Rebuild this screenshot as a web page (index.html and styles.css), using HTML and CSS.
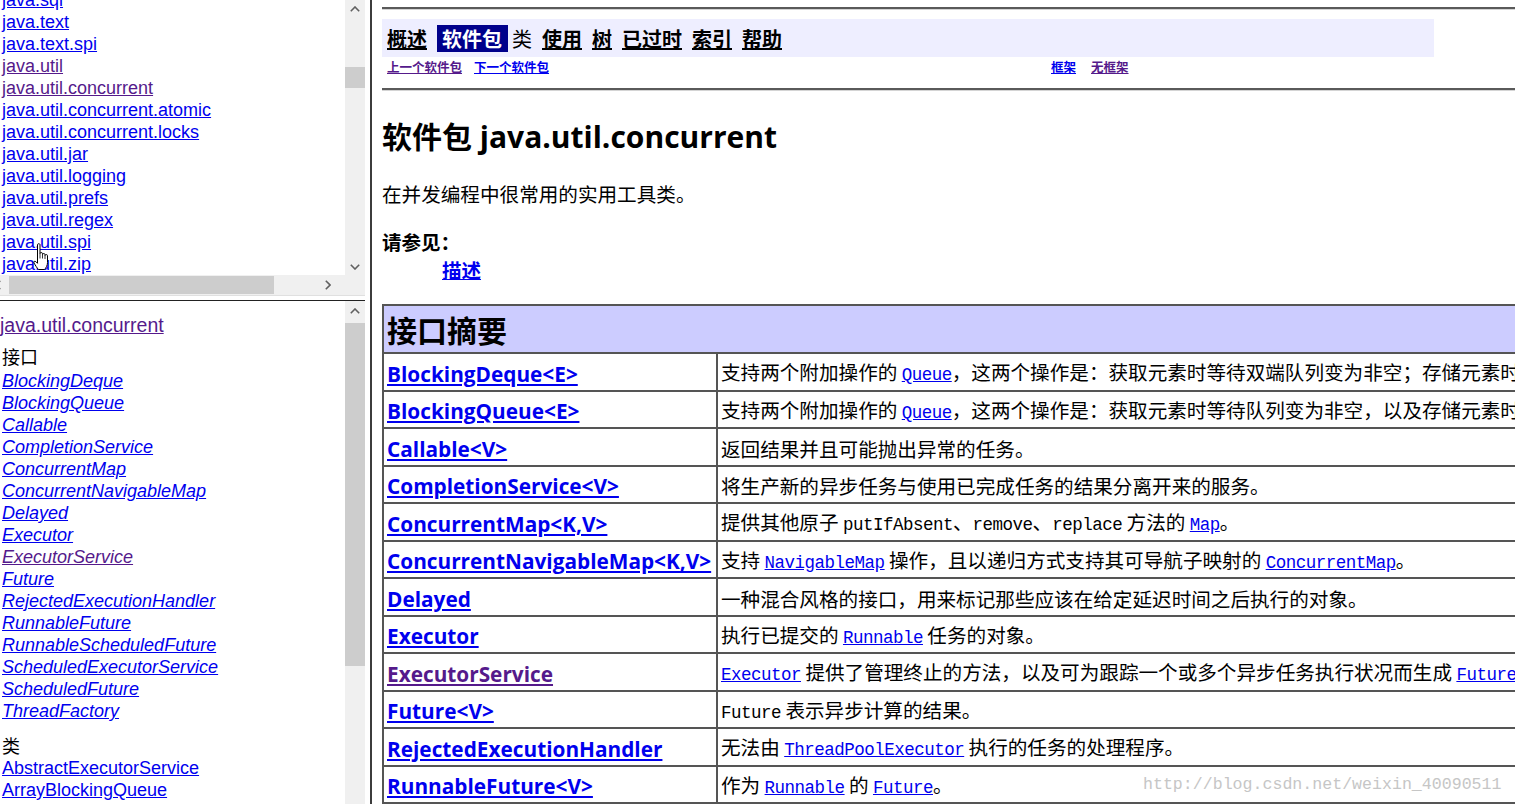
FILE: index.html
```html
<!DOCTYPE html>
<html lang="zh-CN">
<head>
<meta charset="utf-8">
<title>java.util.concurrent</title>
<link rel="stylesheet" href="styles.css">
</head>
<body>
<div class="frameset">
  <div class="left">
    <div class="top-frame">
      <div class="top-view">
        <div class="top-content">
          <ul class="pkg-list">
            <li><a href="#">java.sql</a></li>
            <li><a href="#">java.text</a></li>
            <li><a href="#">java.text.spi</a></li>
            <li><a class="visited" href="#">java.util</a></li>
            <li><a class="visited" href="#">java.util.concurrent</a></li>
            <li><a href="#">java.util.concurrent.atomic</a></li>
            <li><a href="#">java.util.concurrent.locks</a></li>
            <li><a href="#">java.util.jar</a></li>
            <li><a href="#">java.util.logging</a></li>
            <li><a href="#">java.util.prefs</a></li>
            <li><a href="#">java.util.regex</a></li>
            <li><a href="#">java.util.spi</a></li>
            <li><a href="#">java.util.zip</a></li>
            <li><a href="#">javax.accessibility</a></li>
          </ul>
        </div>
        <div class="vscroll">
          <div class="sb-btn"><svg width="10" height="6" viewBox="0 0 10 6"><polyline points="0.8,5.2 5,1 9.2,5.2" class="chev"/></svg></div>
          <div class="sb-track">
            <div class="thumb top-thumb"></div>
          </div>
          <div class="sb-btn"><svg width="10" height="6" viewBox="0 0 10 6"><polyline points="0.8,0.8 5,5 9.2,0.8" class="chev"/></svg></div>
        </div>
      </div>
      <div class="hscroll-row">
        <div class="hscroll">
          <div class="hs-left"><svg width="6" height="10" viewBox="0 0 6 10"><polyline points="5.2,0.8 1,5 5.2,9.2" class="chev"/></svg></div>
          <div class="hthumb"></div>
          <div class="hs-track"></div>
          <div class="hs-right"><svg width="6" height="10" viewBox="0 0 6 10"><polyline points="0.8,0.8 5,5 0.8,9.2" class="chev"/></svg></div>
        </div>
        <div class="corner"></div>
      </div>
    </div>
    <div class="hdivider"></div>
    <div class="bottom-frame">
      <div class="bottom-content">
        <div class="frame-title"><a class="visited" href="#">java.util.concurrent</a></div>
        <div class="group-title">接口</div>
        <ul class="cls-list">
          <li><a href="#"><i>BlockingDeque</i></a></li>
          <li><a href="#"><i>BlockingQueue</i></a></li>
          <li><a href="#"><i>Callable</i></a></li>
          <li><a href="#"><i>CompletionService</i></a></li>
          <li><a href="#"><i>ConcurrentMap</i></a></li>
          <li><a href="#"><i>ConcurrentNavigableMap</i></a></li>
          <li><a href="#"><i>Delayed</i></a></li>
          <li><a href="#"><i>Executor</i></a></li>
          <li><a class="visited" href="#"><i>ExecutorService</i></a></li>
          <li><a href="#"><i>Future</i></a></li>
          <li><a href="#"><i>RejectedExecutionHandler</i></a></li>
          <li><a href="#"><i>RunnableFuture</i></a></li>
          <li><a href="#"><i>RunnableScheduledFuture</i></a></li>
          <li><a href="#"><i>ScheduledExecutorService</i></a></li>
          <li><a href="#"><i>ScheduledFuture</i></a></li>
          <li><a href="#"><i>ThreadFactory</i></a></li>
        </ul>
        <div class="group-title group-gap">类</div>
        <ul class="cls-list cls-list-b">
          <li><a href="#">AbstractExecutorService</a></li>
          <li><a href="#">ArrayBlockingQueue</a></li>
          <li><a href="#">ConcurrentHashMap</a></li>
        </ul>
      </div>
      <div class="vscroll">
        <div class="sb-btn sb-btn-b"><svg width="10" height="6" viewBox="0 0 10 6"><polyline points="0.8,5.2 5,1 9.2,5.2" class="chev"/></svg></div>
        <div class="sb-track">
          <div class="thumb bottom-thumb"></div>
        </div>
      </div>
    </div>
  </div>
  <div class="vdivider"></div>
  <div class="right">
    <div class="hr hr-top"></div>
    <div class="navbar">
      <span class="nav-item"><a href="#">概述</a></span>
      <span class="nav-item nav-rev">软件包</span>
      <span class="nav-item nav-plain">类</span>
      <span class="nav-item"><a href="#">使用</a></span>
      <span class="nav-item"><a href="#">树</a></span>
      <span class="nav-item"><a href="#">已过时</a></span>
      <span class="nav-item"><a href="#">索引</a></span>
      <span class="nav-item"><a href="#">帮助</a></span>
    </div>
    <div class="subnav">
      <div class="subnav-group">
        <a class="visited" href="#">上一个软件包</a>
        <a href="#">下一个软件包</a>
      </div>
      <div class="subnav-group subnav-frames">
        <a href="#">框架</a>
        <a class="visited" href="#">无框架</a>
      </div>
    </div>
    <div class="hr hr-bottom"></div>

    <h2 class="pkg-title">软件包 java.util.concurrent</h2>
    <p class="pkg-desc">在并发编程中很常用的实用工具类。</p>
    <dl class="see-also">
      <dt>请参见：</dt>
      <dd><a href="#">描述</a></dd>
    </dl>

    <table class="summary">
      <colgroup><col class="c-name"><col class="c-desc"></colgroup>
      <tr class="summary-head"><th colspan="2">接口摘要</th></tr>
      <tr class="row">
        <td class="name"><a href="#">BlockingDeque&lt;E&gt;</a></td>
        <td class="desc">支持两个附加操作的 <a href="#"><code>Queue</code></a>，这两个操作是：获取元素时等待双端队列变为非空；存储元素时等待双端队列中的空间变得可用。</td>
      </tr>
      <tr class="row">
        <td class="name"><a href="#">BlockingQueue&lt;E&gt;</a></td>
        <td class="desc">支持两个附加操作的 <a href="#"><code>Queue</code></a>，这两个操作是：获取元素时等待队列变为非空，以及存储元素时等待空间变得可用。</td>
      </tr>
      <tr class="row">
        <td class="name"><a href="#">Callable&lt;V&gt;</a></td>
        <td class="desc">返回结果并且可能抛出异常的任务。</td>
      </tr>
      <tr class="row">
        <td class="name"><a href="#">CompletionService&lt;V&gt;</a></td>
        <td class="desc">将生产新的异步任务与使用已完成任务的结果分离开来的服务。</td>
      </tr>
      <tr class="row">
        <td class="name"><a href="#">ConcurrentMap&lt;K,V&gt;</a></td>
        <td class="desc">提供其他原子 <code>putIfAbsent</code>、<code>remove</code>、<code>replace</code> 方法的 <a href="#"><code>Map</code></a>。</td>
      </tr>
      <tr class="row">
        <td class="name"><a href="#">ConcurrentNavigableMap&lt;K,V&gt;</a></td>
        <td class="desc">支持 <a href="#"><code>NavigableMap</code></a> 操作，且以递归方式支持其可导航子映射的 <a href="#"><code>ConcurrentMap</code></a>。</td>
      </tr>
      <tr class="row">
        <td class="name"><a href="#">Delayed</a></td>
        <td class="desc">一种混合风格的接口，用来标记那些应该在给定延迟时间之后执行的对象。</td>
      </tr>
      <tr class="row">
        <td class="name"><a href="#">Executor</a></td>
        <td class="desc">执行已提交的 <a href="#"><code>Runnable</code></a> 任务的对象。</td>
      </tr>
      <tr class="row">
        <td class="name"><a class="visited" href="#">ExecutorService</a></td>
        <td class="desc"><a href="#"><code>Executor</code></a> 提供了管理终止的方法，以及可为跟踪一个或多个异步任务执行状况而生成 <a href="#"><code>Future</code></a> 的方法。</td>
      </tr>
      <tr class="row">
        <td class="name"><a href="#">Future&lt;V&gt;</a></td>
        <td class="desc"><code>Future</code> 表示异步计算的结果。</td>
      </tr>
      <tr class="row">
        <td class="name"><a href="#">RejectedExecutionHandler</a></td>
        <td class="desc">无法由 <a href="#"><code>ThreadPoolExecutor</code></a> 执行的任务的处理程序。</td>
      </tr>
      <tr class="row">
        <td class="name"><a href="#">RunnableFuture&lt;V&gt;</a></td>
        <td class="desc">作为 <a href="#"><code>Runnable</code></a> 的 <a href="#"><code>Future</code></a>。</td>
      </tr>
      <tr class="row">
        <td class="name"><a href="#">RunnableScheduledFuture&lt;V&gt;</a></td>
        <td class="desc">作为 <a href="#"><code>Runnable</code></a> 的 <a href="#"><code>ScheduledFuture</code></a>。</td>
      </tr>
    </table>
  </div>
</div>

<svg class="cursor" width="18" height="29" viewBox="0 0 18 29">
  <path d="M5.5 1.5c0-1 2.5-1 2.5 0v9c0-1.2 2.5-1.2 2.5 0v1c0-1.2 2.5-1.2 2.5 0v1c0-1.2 2.5-1.2 2.5 0v7c0 3-1.5 5.5-3 7h-6c-1.5-1.5-3-4-4.5-6.5c-0.8-1.4 0.8-2.4 1.8-1.4l1.7 1.7z" fill="#fff" stroke="#000" stroke-width="1" stroke-linejoin="round"/>
  <path d="M8 10.5v5M10.5 11.5v4M13 12.5v3.5" fill="none" stroke="#000" stroke-width="0.8"/>
</svg>
<div class="watermark">http://blog.csdn.net/weixin_40090511</div>
</body>
</html>
```
FILE: styles.css
```css
* { box-sizing: border-box; }
html, body { margin: 0; padding: 0; }
body {
  width: 1515px;
  height: 804px;
  overflow: hidden;
  position: relative;
  background: #fff;
  color: #000;
  font-family: "Liberation Sans", "Noto Sans CJK SC", sans-serif;
}
a { color: #0000ee; text-decoration: underline; }
a.visited { color: #551a8b; }

.frameset { display: flex; height: 804px; }

/* ---------- left frames ---------- */
.left { width: 365px; flex: none; display: flex; flex-direction: column; }
.top-frame { height: 295px; flex: none; display: flex; flex-direction: column; }
.top-view { height: 275px; display: flex; }
.top-content { width: 345px; overflow: hidden; }
.pkg-list, .cls-list { list-style: none; margin: 0; padding: 0 0 0 2px; }
.pkg-list { margin-top: -11px; }
.pkg-list li, .cls-list li {
  height: 22px;
  line-height: 22px;
  font-size: 18px;
  white-space: nowrap;
}

.vscroll {
  width: 20px;
  flex: none;
  background: #f0f0f0;
  display: flex;
  flex-direction: column;
}
.sb-btn { height: 17px; display: flex; align-items: center; justify-content: center; flex: none; }
.sb-btn-b { height: 20px; }
.sb-track { flex: 1; display: flex; flex-direction: column; align-items: center; }
.thumb { width: 20px; background: #cdcdcd; flex: none; }
.top-thumb { margin-top: 50px; height: 21px; }
.bottom-thumb { margin-top: 2px; height: 343px; }
.chev { fill: none; stroke: #606060; stroke-width: 1.6; }

.hscroll-row { height: 20px; display: flex; }
.hscroll { width: 345px; display: flex; background: #f0f0f0; }
.hs-left { width: 9px; display: flex; align-items: center; justify-content: flex-end; overflow: hidden; }
.hs-left svg { margin-right: 8px; flex: none; }
.hthumb { width: 265px; margin: 1px 0 1px; background: #cdcdcd; }
.hs-track { flex: 1; }
.hs-right { width: 20px; display: flex; align-items: center; justify-content: flex-start; }
.corner { width: 20px; background: #f0f0f0; }

.hdivider {
  height: 6px;
  flex: none;
  border-top: 1px solid #e0e0e0;
  border-bottom: 1px solid #222;
}

.bottom-frame { flex: 1; display: flex; min-height: 0; }
.bottom-content { width: 345px; overflow: hidden; padding-top: 12px; }
.frame-title {
  font-size: 19.5px;
  line-height: 24px;
  height: 24px;
  white-space: nowrap;
}
.group-title {
  font-size: 18px;
  line-height: 22px;
  height: 22px;
  margin-top: 8px;
  padding-left: 2px;
  font-family: "Noto Sans CJK SC", sans-serif;
}
.group-gap { margin-top: 12px; }
.cls-list { margin-top: 3px; }
.cls-list-b { margin-top: 1px; }

.vdivider {
  width: 7px;
  flex: none;
  background: #fff;
  border-right: 2px solid #3c3c3c;
}

/* ---------- right frame ---------- */
.right {
  flex: 1;
  min-width: 0;
  overflow: hidden;
  padding-left: 10px;
  font-family: "Noto Sans CJK SC", sans-serif;
}
.hr {
  height: 3px;
  border-top: 2px solid #5a5a5a;
  border-bottom: 1px solid #d4d4d4;
  width: 1200px;
}
.hr-top { margin-top: 7px; }
.hr-bottom { margin-top: 10px; }

.navbar {
  margin-top: 9px;
  width: 1052px;
  height: 38px;
  background: #eeeeff;
  display: flex;
  align-items: center;
  padding-left: 5px;
}
.nav-item {
  font-size: 20px;
  font-weight: bold;
  line-height: 27px;
  height: 27px;
  padding-right: 6px;
  margin-right: 4px;
  white-space: nowrap;
}
.nav-item a { color: #000; }
.nav-rev { background: #00008b; color: #fff; padding: 0 6px 0 5px; }
.nav-plain { font-weight: normal; }

.subnav {
  height: 21px;
  display: grid;
  grid-template-columns: 664px auto;
  padding-left: 5px;
  font-size: 12.5px;
  font-weight: bold;
  line-height: 19px;
}
.subnav-group { display: flex; gap: 12px; white-space: nowrap; }
.subnav-frames { gap: 15px; }

.pkg-title {
  margin: 26px 0 0;
  font-family: "Open Sans", "Noto Sans CJK SC", sans-serif;
  font-size: 30px;
  font-weight: bold;
  line-height: 40px;
  height: 40px;
  white-space: nowrap;
}
.pkg-desc {
  margin: 23px 0 0;
  font-size: 19.6px;
  line-height: 28px;
  height: 28px;
}
.see-also { margin: 20px 0 0; }
.see-also dt { font-size: 19.5px; font-weight: bold; line-height: 28px; height: 28px; }
.see-also dd { margin: 0 0 0 60px; font-size: 19.5px; font-weight: bold; line-height: 28px; height: 28px; }

.summary {
  margin-top: 20px;
  table-layout: fixed;
  width: 1900px;
  border-collapse: separate;
  border-spacing: 0;
  border: 1px solid #555;
}
.summary col.c-name { width: 334px; }
.summary th, .summary td {
  border: 1px solid #555;
  padding: 3px;
  white-space: nowrap;
  text-align: left;
  vertical-align: middle;
  overflow: hidden;
}
.summary-head th {
  background: #ccccff;
  font-size: 30px;
  font-weight: bold;
  line-height: 40px;
  height: 48px;
}
.summary tr.row { height: 37.5px; }
.summary td { line-height: 24px; padding: 5px 3px 1px; }
.summary td.name {
  font-family: "Open Sans", "Noto Sans CJK SC", sans-serif;
  font-size: 20.8px;
  font-weight: bold;
}
.summary td.desc { font-size: 19.6px; }
code {
  font-family: "Liberation Mono", monospace;
  font-size: 17.5px;
  letter-spacing: -0.5px;
}

/* ---------- overlays ---------- */
.cursor { position: absolute; left: 32px; top: 243px; }
.watermark {
  position: absolute;
  left: 1143px;
  top: 774px;
  font-family: "Liberation Mono", monospace;
  font-size: 16.6px;
  line-height: 22px;
  color: #c6c6c6;
  white-space: nowrap;
}
```
